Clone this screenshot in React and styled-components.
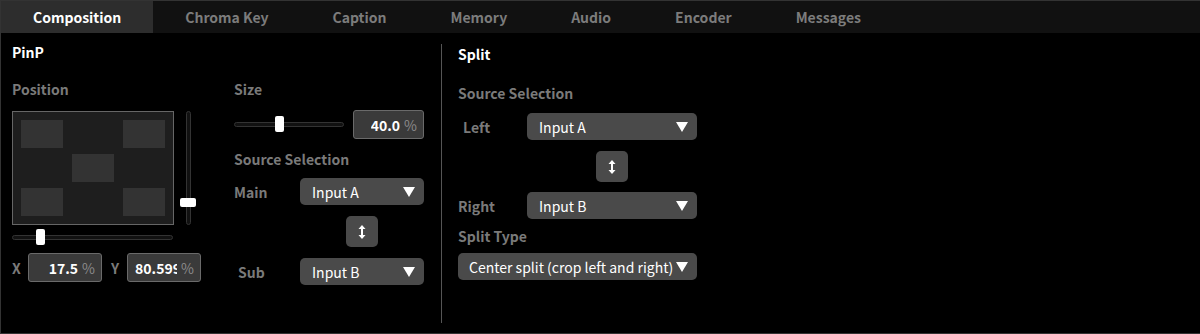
import React from 'react';
import styled, { createGlobalStyle } from 'styled-components';

const GlobalStyle = createGlobalStyle`
  html, body {
    margin: 0;
    padding: 0;
    background: #000;
  }
  body {
    font-family: 'Noto Sans CJK JP', 'Noto Sans', sans-serif;
    font-size: 14px;
    color: #fff;
  }
`;

const Frame = styled.div`
  width: 1200px;
  height: 332px;
  border: 1px solid #333;
  border-right: none;
  display: flex;
  flex-direction: column;
  background: #000;
  overflow: hidden;
`;

const TabBar = styled.div`
  display: flex;
  height: 32px;
  background: #111;
  flex-shrink: 0;
`;

const Tab = styled.div`
  padding: 0 32px;
  display: flex;
  align-items: center;
  font-weight: 700;
  font-size: 14px;
  color: ${(props) => (props.$active ? '#fff' : '#7c7c7c')};
  background: ${(props) => (props.$active ? '#2d2d2d' : 'transparent')};
`;

const Body = styled.div`
  display: flex;
  flex: 1;
  padding: 11px 0 10px;
`;

const PinPPanel = styled.div`
  width: 429px;
  padding-left: 11px;
  border-right: 1px solid #555;
  display: flex;
  flex-direction: column;
`;

const SplitPanel = styled.div`
  padding-left: 16px;
  display: flex;
  flex-direction: column;
`;

const Title = styled.div`
  font-weight: 700;
  font-size: 14px;
  line-height: 20px;
  color: #fff;
  margin-top: ${(props) => props.$top || 0}px;
`;

const Label = styled.div`
  box-sizing: border-box;
  font-weight: 700;
  font-size: 14px;
  line-height: 20px;
  color: #7a7a7a;
  margin-top: ${(props) => props.$top || 0}px;
  width: ${(props) => (props.$width ? props.$width + 'px' : 'auto')};
  padding-left: ${(props) => props.$indent || 0}px;
  flex-shrink: 0;
`;

const Columns = styled.div`
  display: flex;
  gap: 32px;
  margin-top: 17px;
`;

const Column = styled.div`
  display: flex;
  flex-direction: column;
  width: ${(props) => props.$width}px;
`;

const PadRow = styled.div`
  display: flex;
  gap: 6px;
  margin-top: 12px;
`;

const Pad = styled.div`
  box-sizing: border-box;
  width: 162px;
  height: 114px;
  border: 1px solid #666;
  background: #1e1e1e;
  display: grid;
  grid-template-columns: repeat(3, 42px);
  grid-template-rows: repeat(3, 28px);
  gap: 6px 9px;
  padding: 8px;
`;

const Spot = styled.div`
  background: #333;
  grid-column: ${(props) => props.$col};
  grid-row: ${(props) => props.$row};
`;

const VTrack = styled.div`
  position: relative;
  width: 3px;
  height: 112px;
  margin-left: 6px;
  border: 1px solid #333;
  border-radius: 3px;
  background: #111;
`;

const VThumb = styled.div`
  position: absolute;
  left: -7px;
  width: 16px;
  height: 9px;
  border-radius: 2px;
  background: #fff;
`;

const HTrack = styled.div`
  position: relative;
  width: ${(props) => props.$width}px;
  height: 3px;
  border: 1px solid #333;
  border-radius: 3px;
  background: #111;
  flex-shrink: 0;
`;

const HThumb = styled.div`
  position: absolute;
  top: -7px;
  width: 9px;
  height: 16px;
  border-radius: 2px;
  background: #fff;
`;

const XYRow = styled.div`
  display: flex;
  align-items: center;
  margin-top: 13px;
`;

const AxisLabel = styled.div`
  font-weight: 700;
  color: #7a7a7a;
  width: 16px;
  margin-left: ${(props) => props.$left || 0}px;
`;

const NumBox = styled.div`
  width: ${(props) => props.$width}px;
  height: 29px;
  box-sizing: border-box;
  border: 1px solid #6a6a6a;
  border-radius: 3px;
  background: #3a3a3a;
  display: flex;
  align-items: center;
  justify-content: flex-end;
  padding-right: 6px;
  gap: 4px;
  overflow: hidden;
`;

const NumValue = styled.span`
  font-weight: 700;
  color: #fff;
  white-space: nowrap;
  overflow: hidden;
  max-width: ${(props) => props.$max || 200}px;
`;

const Unit = styled.span`
  color: #8a8a8a;
`;

const SizeRow = styled.div`
  display: flex;
  align-items: center;
  justify-content: space-between;
  margin-top: 11px;
`;

const SelectRow = styled.div`
  display: flex;
  align-items: center;
  margin-top: ${(props) => props.$top || 0}px;
`;

const Select = styled.div`
  width: ${(props) => props.$width}px;
  height: 27px;
  border-radius: 5px;
  background: #4a4a4a;
  display: flex;
  align-items: center;
  justify-content: space-between;
  padding: 0 9px 0 ${(props) => props.$pad || 12}px;
  box-sizing: border-box;
  color: #fff;
  font-size: 14px;
  white-space: nowrap;
  flex-shrink: 0;
`;

const Caret = styled.span`
  width: 0;
  height: 0;
  border-left: 6px solid transparent;
  border-right: 6px solid transparent;
  border-top: 10px solid #fff;
`;

const SwapButton = styled.div`
  width: 32px;
  height: 31px;
  border-radius: 5px;
  background: #4a4a4a;
  display: flex;
  align-items: center;
  justify-content: center;
  margin: 11px 0 0 ${(props) => props.$left}px;
`;

const SwapIcon = () => (
  <svg width="8" height="14" viewBox="0 0 8 14">
    <path d="M4 0 L7.5 4 L0.5 4 Z M4 14 L7.5 10 L0.5 10 Z" fill="#fff" />
    <rect x="3" y="3" width="2" height="8" fill="#fff" />
  </svg>
);

const tabs = ['Composition', 'Chroma Key', 'Caption', 'Memory', 'Audio', 'Encoder', 'Messages'];

const App = () => {
  return (
    <>
      <GlobalStyle />
      <Frame>
        <TabBar>
          {tabs.map((t, i) => (
            <Tab key={t} $active={i === 0}>
              {t}
            </Tab>
          ))}
        </TabBar>
        <Body>
          <PinPPanel>
            <Title $top={-2}>PinP</Title>
            <Columns>
              <Column $width={190}>
                <Label>Position</Label>
                <PadRow>
                  <Pad>
                    <Spot $col={1} $row={1} />
                    <Spot $col={3} $row={1} />
                    <Spot $col={2} $row={2} />
                    <Spot $col={1} $row={3} />
                    <Spot $col={3} $row={3} />
                  </Pad>
                  <VTrack>
                    <VThumb style={{ top: '86px' }} />
                  </VTrack>
                </PadRow>
                <SelectRow $top={10}>
                  <HTrack $width={159}>
                    <HThumb style={{ left: '23px' }} />
                  </HTrack>
                </SelectRow>
                <XYRow>
                  <AxisLabel>X</AxisLabel>
                  <NumBox $width={74}>
                    <NumValue>17.5</NumValue>
                    <Unit>%</Unit>
                  </NumBox>
                  <AxisLabel $left={9}>Y</AxisLabel>
                  <NumBox $width={74}>
                    <NumValue $max={42}>80.5999</NumValue>
                    <Unit>%</Unit>
                  </NumBox>
                </XYRow>
              </Column>
              <Column $width={190}>
                <Label>Size</Label>
                <SizeRow>
                  <HTrack $width={108}>
                    <HThumb style={{ left: '40px' }} />
                  </HTrack>
                  <NumBox $width={71}>
                    <NumValue>40.0</NumValue>
                    <Unit>%</Unit>
                  </NumBox>
                </SizeRow>
                <Label $top={10}>Source Selection</Label>
                <SelectRow $top={9}>
                  <Label $width={66}>Main</Label>
                  <Select $width={124}>
                    Input A
                    <Caret />
                  </Select>
                </SelectRow>
                <SwapButton $left={112}>
                  <SwapIcon />
                </SwapButton>
                <SelectRow $top={11}>
                  <Label $width={66} $indent={4}>
                    Sub
                  </Label>
                  <Select $width={124}>
                    Input B
                    <Caret />
                  </Select>
                </SelectRow>
              </Column>
            </Columns>
          </PinPPanel>
          <SplitPanel>
            <Title $top={0}>Split</Title>
            <Label $top={19}>Source Selection</Label>
            <SelectRow $top={10}>
              <Label $width={69} $indent={5}>
                Left
              </Label>
              <Select $width={170}>
                Input A
                <Caret />
              </Select>
            </SelectRow>
            <SwapButton $left={138}>
              <SwapIcon />
            </SwapButton>
            <SelectRow $top={10}>
              <Label $width={69}>Right</Label>
              <Select $width={170}>
                Input B
                <Caret />
              </Select>
            </SelectRow>
            <Label $top={7}>Split Type</Label>
            <SelectRow $top={7}>
              <Select $width={239} $pad={11}>
                Center split (crop left and right)
                <Caret />
              </Select>
            </SelectRow>
          </SplitPanel>
        </Body>
      </Frame>
    </>
  );
};

export default App;
